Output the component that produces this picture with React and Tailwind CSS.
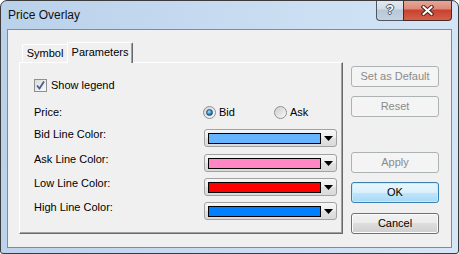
// Price Overlay dialog — Windows 7 style property dialog

const LINE_COLORS = [
  { label: "Bid Line Color:", swatch: "bg-[#66b3ff]" },
  { label: "Ask Line Color:", swatch: "bg-[#ff88c4]" },
  { label: "Low Line Color:", swatch: "bg-[#ff0000]" },
  { label: "High Line Color:", swatch: "bg-[#0080ff]" },
];

function Radio({ checked }) {
  return (
    <div className="flex h-[13px] w-[13px] items-center justify-center rounded-full border border-[#8e8f8f] bg-[linear-gradient(135deg,#d4d4d4,#fbfbfb)]">
      {checked ? (
        <div className="h-[7px] w-[7px] rounded-full border border-[#1d4d76] bg-[radial-gradient(circle_at_40%_35%,#a6e4ff,#2a86c6_55%,#0d3f6d)]" />
      ) : (
        <div className="h-[9px] w-[9px] rounded-full bg-[linear-gradient(135deg,#cfcfcf,#f4f4f4)]" />
      )}
    </div>
  );
}

function Checkbox() {
  return (
    <div className="flex h-[13px] w-[13px] items-center justify-center border border-[#8e8f8f] bg-white">
      <div className="flex h-[11px] w-[11px] items-center justify-center bg-[linear-gradient(135deg,#dcdcdc,#fafafa)]">
        <svg width="11" height="11" viewBox="0 0 11 11">
          <path d="M2 5.5 L4.5 8.5 L9 1.5" fill="none" stroke="#4a5e8e" strokeWidth="1.8" />
        </svg>
      </div>
    </div>
  );
}

function ColorCombo({ swatch }) {
  return (
    <div className="flex h-[18px] w-[133px] items-center gap-[3px] rounded-[3px] border border-[#a2a2a2] bg-[linear-gradient(#f6f6f6,#ededed_50%,#e2e2e2_50%,#dadada)] px-[3px]">
      <div className={`h-[11px] w-[113px] border border-black ${swatch}`} />
      <svg width="9" height="5" viewBox="0 0 9 5">
        <polygon points="0,0 9,0 4.5,5" fill="#000" />
      </svg>
    </div>
  );
}

function Button({ children, variant = "normal" }) {
  const styles = {
    disabled: "border-[#adb2b5] bg-[#f4f4f4] text-[#8b8b8b]",
    normal:
      "border-[#707070] bg-[linear-gradient(#f2f2f2,#ebebeb_50%,#dddddd_50%,#cfcfcf)] text-black shadow-[inset_0_0_0_1px_#fcfcfc]",
    default:
      "border-[#3c7fb1] bg-[linear-gradient(#eaf6fd,#d9f0fc_50%,#bee6fd_50%,#a7d9f5)] text-black shadow-[inset_0_0_0_1px_#c5ecfd]",
  };
  return (
    <div
      className={`flex h-[21px] w-[88px] items-center justify-center rounded-[3px] border text-[11px] ${styles[variant]}`}
    >
      {children}
    </div>
  );
}

export default function App() {
  return (
    <div className="h-[254px] w-[459px] overflow-hidden rounded-t-[7px] rounded-b-[3px] border border-[#3b3b3b] bg-[linear-gradient(100deg,#b9d1ea,#c8dcf1_50%,#d6e6f7)] font-['Liberation_Sans',Arial,sans-serif] text-black">
      {/* title bar */}
      <div className="flex h-[28px] items-start justify-between pl-[7px] pr-[6px]">
        <div className="pt-[7px] text-[12px] leading-[15px] text-[#111]">Price Overlay</div>
        <div className="-mt-px flex">
          <div className="flex h-[21px] w-[27px] items-center justify-center rounded-bl-[4px] border-b border-l border-[#4d5662] bg-[linear-gradient(#e2e9f1,#d2dde8_45%,#b9c8d8_50%,#c3d2e1)] text-[13px] font-bold text-white [text-shadow:1px_0_#47525e,-1px_0_#47525e,0_1px_#47525e,0_-1px_#47525e]">
            ?
          </div>
          <div className="flex h-[21px] w-[49px] items-center justify-center rounded-br-[4px] border-b border-l border-r border-[#4a2a26] bg-[linear-gradient(#e9a99b,#dd8a78_45%,#c8412f_50%,#d4604a)]">
            <svg width="13" height="11" viewBox="0 0 13 11">
              <path d="M2.5 2 L10.5 9 M10.5 2 L2.5 9" stroke="#4b2420" strokeWidth="4" strokeLinecap="square" />
              <path d="M2.5 2 L10.5 9 M10.5 2 L2.5 9" stroke="#fff" strokeWidth="2" strokeLinecap="square" />
            </svg>
          </div>
        </div>
      </div>

      {/* client area */}
      <div className="mx-[6px] flex h-[219px] border border-[#7f8b98] bg-[#f0f0f0] text-[11px]">
        {/* tab control */}
        <div className="ml-[11px] mt-[12px] flex w-[324px] flex-col">
          <div className="flex h-[20px] items-end pl-[3px]">
            <div className="flex h-[18px] w-[45px] items-start justify-center rounded-tl-[2px] border-l border-t border-white pt-[2px] leading-[13px]">
              Symbol
            </div>
            <div className="relative z-10 -mb-px flex h-[21px] w-[66px] items-start justify-center rounded-t-[2px] border-l border-r border-t border-l-white border-r-[#696969] border-t-white bg-[#f0f0f0] pt-[3px] leading-[13px] shadow-[inset_-1px_0_0_#a0a0a0]">
              Parameters
            </div>
          </div>
          <div className="flex h-[172px] flex-col border border-b-[#696969] border-l-white border-r-[#696969] border-t-white pl-[14px] pt-[16px] shadow-[inset_-1px_-1px_0_#a0a0a0]">
            <div className="flex h-[13px] items-center gap-[4px]">
              <Checkbox />
              <span className="leading-[13px]">Show legend</span>
            </div>
            <div className="mt-[14px] flex h-[13px] items-center">
              <span className="w-[169px] leading-[13px]">Price:</span>
              <div className="flex w-[71px] items-center gap-[3px]">
                <Radio checked />
                <span className="leading-[13px]">Bid</span>
              </div>
              <div className="flex items-center gap-[3px]">
                <Radio />
                <span className="leading-[13px]">Ask</span>
              </div>
            </div>
            {LINE_COLORS.map((row, i) => (
              <div
                key={row.label}
                className={`flex h-[18px] items-start ${i === 0 ? "mt-[10px]" : i === 1 ? "mt-[7px]" : "mt-[6px]"}`}
              >
                <span className="-mt-[1px] w-[170px] leading-[13px]">{row.label}</span>
                <ColorCombo swatch={row.swatch} />
              </div>
            ))}
          </div>
        </div>

        {/* button column */}
        <div className="ml-[8px] mt-[36px] flex flex-col">
          <Button variant="disabled">Set as Default</Button>
          <div className="mt-[9px]">
            <Button variant="disabled">Reset</Button>
          </div>
          <div className="mt-[35px]">
            <Button variant="disabled">Apply</Button>
          </div>
          <div className="mt-[9px]">
            <Button variant="default">OK</Button>
          </div>
          <div className="mt-[10px]">
            <Button>Cancel</Button>
          </div>
        </div>
      </div>
    </div>
  );
}
